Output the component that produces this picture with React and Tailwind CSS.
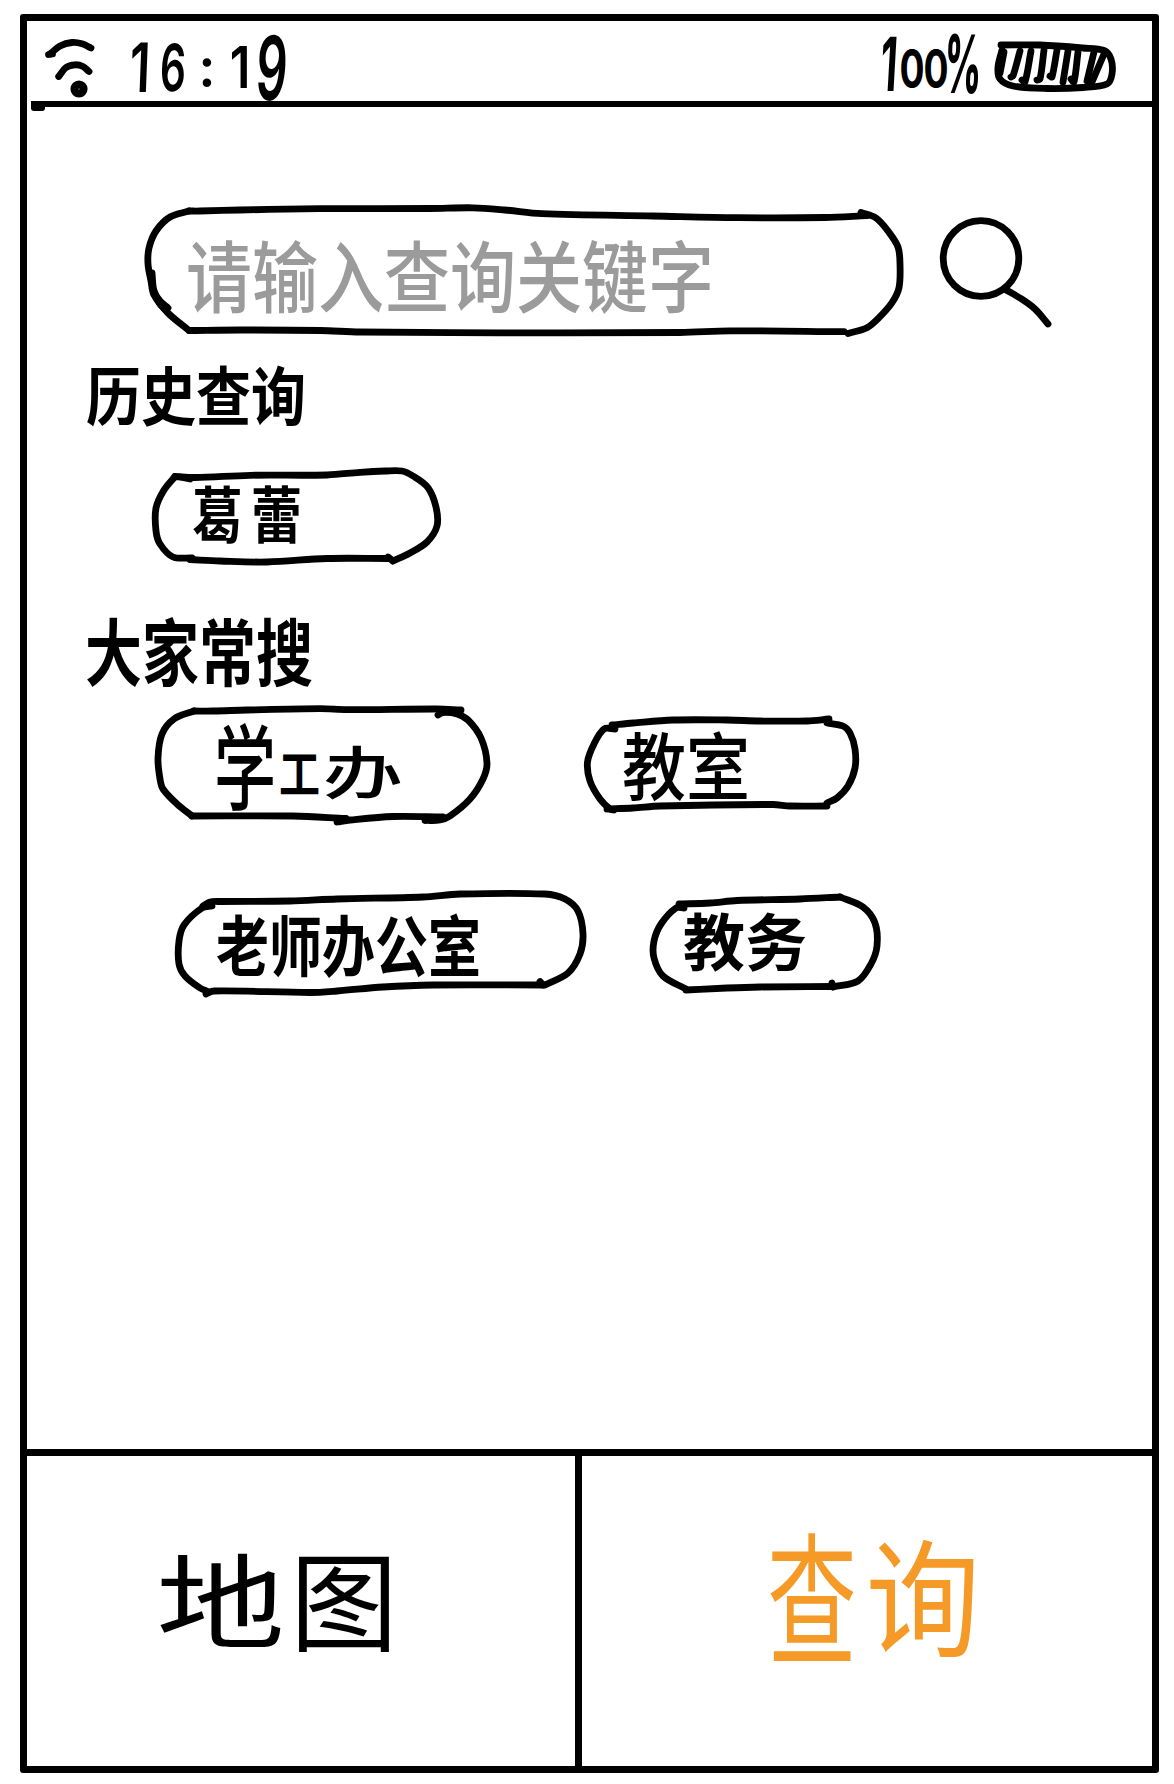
import React from "react";

const CJK = "font-['Noto_Sans_CJK_SC',sans-serif]";

// Builds a smooth curve that passes through every point; handles follow the
// distance between points so uneven spacing keeps the bends round.
function curve(p) {
  const dist = (a, b) => Math.hypot(a[0] - b[0], a[1] - b[1]) || 1;
  const slope = (i) => {
    const a = p[i - 1] || p[i];
    const c = p[i + 1] || p[i];
    const len = (p[i - 1] ? dist(a, p[i]) : 0) + (p[i + 1] ? dist(p[i], c) : 0);
    return [(c[0] - a[0]) / len, (c[1] - a[1]) / len];
  };
  let d = `M${p[0][0]} ${p[0][1]}`;
  for (let i = 0; i < p.length - 1; i++) {
    const b = p[i];
    const c = p[i + 1];
    const h = dist(b, c) / 3;
    const s = slope(i);
    const t = slope(i + 1);
    d += `C${b[0] + s[0] * h} ${b[1] + s[1] * h} ${c[0] - t[0] * h} ${c[1] - t[1] * h} ${c[0]} ${c[1]}`;
  }
  return d;
}

function Sketch({ box, lines, className, width = 6.8, children }) {
  return (
    <svg
      viewBox={box}
      className={className}
      fill="none"
      stroke="#000"
      strokeWidth={width}
      strokeLinecap="round"
      strokeLinejoin="round"
      aria-hidden="true"
    >
      {lines.map((l, i) => (
        <path key={i} d={curve(l)} />
      ))}
      {children}
    </svg>
  );
}

function Pill({ className, box, lines, children }) {
  return (
    <div className={`relative shrink-0 ${className}`}>
      <Sketch box={box} lines={lines} className="absolute inset-0 h-full w-full overflow-visible" />
      <div className={`relative flex whitespace-nowrap leading-none ${CJK}`}>{children}</div>
    </div>
  );
}

const wifi = [
  [[50, 54], [60, 46], [72, 42.5], [82, 43.8], [91, 48]],
  [[48.5, 54.5], [52.5, 54]],
  [[58.7, 76.5], [66, 67.5], [75, 64.8], [83, 66.5], [89, 71.5]],
];

const battery = [
  [[1001, 45], [1040, 45], [1083, 48], [1104, 50.5], [1111, 59], [1112, 74], [1107, 84], [1083, 87.5], [1047, 88.5], [1013, 86], [1000, 79], [998, 67], [1002, 50]],
];

const hatches = [
  [[1004, 52], [1000, 73]],
  [[1020, 51], [1013, 76], [1011, 77]],
  [[1031, 51], [1025, 82], [1022, 80]],
  [[1044, 50], [1040, 79], [1037, 80]],
  [[1057, 50], [1052, 77], [1050, 76]],
  [[1068, 51], [1063, 82]],
  [[1078, 52], [1074, 82], [1071, 79]],
  [[1094, 52], [1087, 81]],
  [[1104, 54], [1092, 82]],
];

const searchPill = [
  [[189, 210], [200, 210], [240, 209], [320, 207.7], [430, 207.5], [473, 206.8], [505, 209], [542, 212.7], [653, 215], [737, 216.7], [825, 216.5], [867, 214.7]],
  [[189, 210], [170, 216], [156, 230], [149, 247], [148, 263], [151, 280], [154, 294], [168, 312], [189, 329.5]],
  [[189, 329.5], [240, 329], [320, 329.5], [360, 331], [500, 331.8], [680, 331.5], [730, 329.8], [844, 330.7]],
  [[152, 272], [154, 290], [160, 300], [168, 307]],
  [[153, 288], [160, 303], [166, 309]],
  [[848, 332.5], [867, 326.7], [879, 316.7], [892, 301.7], [899, 286.7], [900, 263], [898, 246], [888, 230], [876, 217], [861, 211.5]],
];

const historyPill = [
  [[175, 475.5], [195, 476.5], [250, 474.3], [327, 474], [360, 471.3], [385, 470], [402, 470], [413, 475], [428, 486.7], [436, 506], [437, 525], [427, 541], [410, 552], [393, 560]],
  [[393, 560], [388, 556]],
  [[388, 557.5], [327, 557.5], [267, 561], [220, 560], [190, 558.5]],
  [[192, 557], [173, 556], [160, 543], [156, 530], [156, 507], [164, 489], [175, 475.5]],
  [[180, 476], [190, 478]],
];

const studentPill = [
  [[194, 710], [213, 710], [247, 709], [320, 707.7], [347, 708.7], [437, 708], [461, 709]],
  [[438, 714], [443, 711.5], [457, 713], [468, 719], [481, 737], [487, 762], [483, 778], [470, 798], [450, 815], [440, 819], [425, 819.5]],
  [[194, 710], [174, 718], [162, 733], [158, 757], [160, 778], [163, 788], [177, 803], [192, 815]],
  [[192, 815], [293, 815], [346, 817.5]],
  [[337, 821], [350, 819], [393, 815.5], [443, 816]],
];

const roomPill = [
  [[612, 724], [633, 722], [673, 719], [727, 719], [760, 720], [807, 720], [829, 718]],
  [[827, 722], [843, 725], [850, 732], [855, 748], [855, 767], [848, 785], [837, 797], [827, 802]],
  [[607, 808], [633, 807], [660, 805], [773, 803.5], [790, 805], [827, 805]],
  [[615, 728], [604, 728], [594, 743], [587.5, 761], [590, 780], [600, 798], [610, 808], [614, 809]],
];

const teacherPill = [
  [[203, 905], [210, 901], [220, 900.5], [290, 900], [337, 898], [423, 896], [460, 893], [545, 893], [565, 898], [578, 910], [583, 933], [580, 953], [568, 972], [545, 984]],
  [[206, 993], [214, 990], [310, 991.5], [337, 990], [383, 986], [433, 984], [543, 984]],
  [[543, 984], [540, 980.5]],
  [[212, 905], [202, 907], [184, 924], [179, 940], [179, 963], [185, 975], [200, 987], [208, 990.5]],
];

const affairsPill = [
  [[679, 903], [710, 902], [737, 899.5], [800, 898], [840, 896]],
  [[840, 896], [863, 906], [875, 922], [877, 945], [871, 963], [858, 980], [833, 986]],
  [[833, 986], [832, 982]],
  [[686, 989], [727, 987], [760, 986], [833, 985.5]],
  [[684, 907], [676, 907], [661, 923], [654, 940], [654, 957], [663, 975], [686, 988]],
];

function StatusBar() {
  return (
    <header className="relative flex h-20 shrink-0 items-start">
      <Sketch box="44 34 52 68" lines={wifi} className="mt-[13px] ml-[17px] h-[68px] w-[52px] shrink-0 overflow-visible">
        <circle cx="79" cy="89" r="4.6" strokeWidth="8" />
      </Sketch>
      <div className="mt-[12px] ml-[28px] flex w-[182px] shrink-0 font-['Inter',sans-serif] text-[68px] leading-none font-semibold">
        <span className="flex w-8 -skew-x-3 scale-x-[0.72] justify-center">1</span>
        <span className="flex w-[34px] -skew-x-3 scale-x-[0.6] scale-y-[0.96] justify-center">6</span>
        <span className="flex w-[34px] scale-[0.8] justify-center">:</span>
        <span className="flex w-[32px] scale-x-[0.72] scale-y-[0.84] justify-center">1</span>
        <span className="flex w-8 -skew-x-6 scale-x-[0.72] scale-y-[1.3] justify-center">9</span>
      </div>
      <div className="mt-[13px] ml-[572px] flex w-[116px] shrink-0 font-['Inter',sans-serif] text-[62px] leading-none font-bold">
        <span className="flex w-[22px] -skew-x-6 scale-x-[0.64] scale-y-[1.2] justify-center">1</span>
        <span className="mt-[4px] flex w-[24px] scale-x-[0.6] scale-y-[0.86] justify-center">0</span>
        <span className="mt-[4px] flex w-[24px] scale-x-[0.6] scale-y-[0.86] justify-center">0</span>
        <span className="flex w-[30px] -skew-x-6 scale-x-[0.58] scale-y-[1.3] justify-center font-extrabold">%</span>
      </div>
      <Sketch box="994 41 122 52" lines={battery} className="mt-5 h-[52px] w-[122px] shrink-0 overflow-visible">
        {hatches.map((l, i) => (
          <path key={i} d={curve(l)} />
        ))}
      </Sketch>
    </header>
  );
}

export default function App() {
  return (
    <div className="h-[1784px] w-[1174px] overflow-hidden bg-white pt-3.5 pl-5 text-black">
      <div className="flex h-[1759px] w-[1139px] flex-col rounded-[3px] border-7 border-black">
        <StatusBar />
        <div className="ml-1 h-1.5 shrink-0 bg-black">
          <div className="h-2.5 w-3.5 rounded-[3px] bg-black" />
        </div>

        <main className="h-[1342px] shrink-0 pt-[101px]">
          <div className="flex pl-[122px]">
            <Pill className="h-[126px] w-[751px] pt-[32px] pl-[37px]" box="149 207 751 126" lines={searchPill}>
              <span className="inline-block scale-y-[1.18] text-[66px] font-medium text-[#9b9b9b]">请输入查询关键字</span>
            </Pill>
            <Sketch box="940 217 112 109" lines={[[[1006, 289], [1020, 297], [1035, 308], [1048, 323]]]} className="mt-2.5 ml-10 h-[109px] w-[112px] shrink-0 overflow-visible">
              <ellipse cx="981" cy="257.5" rx="37.8" ry="37.8" />
            </Sketch>
          </div>

          <h2 className={`mt-[26px] ml-[59px] h-16 w-56 scale-y-[1.16] text-[55px] leading-[64px] font-bold ${CJK}`}>历史查询</h2>

          <div className="mt-[47px] pl-[129px]">
            <Pill className="h-[91px] w-[281px] pt-[16px] pl-[36px]" box="156 470 281 91" lines={historyPill}>
              <span className="inline-block scale-y-[1.2] text-[51px] font-bold tracking-[8px]">葛蕾</span>
            </Pill>
          </div>

          <h2 className={`mt-[49px] ml-[58px] h-[75px] w-60 scale-y-[1.28] text-[57px] leading-[75px] font-bold ${CJK}`}>大家常搜</h2>

          <div className="mt-[23px] flex pl-[131px]">
            <Pill className="h-[112px] w-[329px] pt-[23px] pl-[54px]" box="158 708 329 112" lines={studentPill}>
              <span className="flex w-[66px] scale-y-[1.5] justify-center text-[62px] font-medium">学</span>
              <span className="mt-[19px] flex w-[43px] scale-y-[1.25] justify-center text-[41px] font-bold">工</span>
              <span className="mt-[9px] flex w-[84px] scale-x-[1.4] justify-center text-[57px] font-medium">办</span>
            </Pill>
            <Pill className="mt-[11px] ml-[100px] h-[89px] w-[268px] pt-[10px] pl-[35px]" box="587 719 268 89" lines={roomPill}>
              <span className="inline-block scale-y-[1.14] text-[64px] font-medium">教室</span>
            </Pill>
          </div>

          <div className="mt-[73px] flex pl-[152px]">
            <Pill className="h-[99px] w-[404px] pt-[22px] pl-[37px]" box="179 893 404 99" lines={teacherPill}>
              <span className="inline-block scale-y-[1.25] text-[53px] font-bold">老师办公室</span>
            </Pill>
            <Pill className="mt-[2px] ml-[71px] h-[94px] w-[223px] pt-[12px] pl-[29px]" box="654 895 223 94" lines={affairsPill}>
              <span className="inline-block text-[62px] font-bold">教务</span>
            </Pill>
          </div>
        </main>

        <nav className={`flex flex-1 border-t-7 border-black leading-none ${CJK}`}>
          <button className="flex w-[555px] items-start border-r-7 border-black pt-[85px] pl-[128px] text-left text-[110px] leading-none">
            <span className="flex w-[131px] scale-x-[1.17] scale-y-[0.94] justify-center">地</span>
            <span className="ml-[4px] flex w-[108px] scale-[0.98] justify-center">图</span>
          </button>
          <button className="flex flex-1 items-start pt-[84px] pl-[185px] text-left text-[104px] leading-none text-[#f59a26]">
            <span className="flex w-[90px] scale-x-[0.86] scale-y-[1.38] justify-center">查</span>
            <span className="ml-[10px] flex w-[112px] scale-x-[1.1] scale-y-[1.22] justify-center">询</span>
          </button>
        </nav>
      </div>
    </div>
  );
}
